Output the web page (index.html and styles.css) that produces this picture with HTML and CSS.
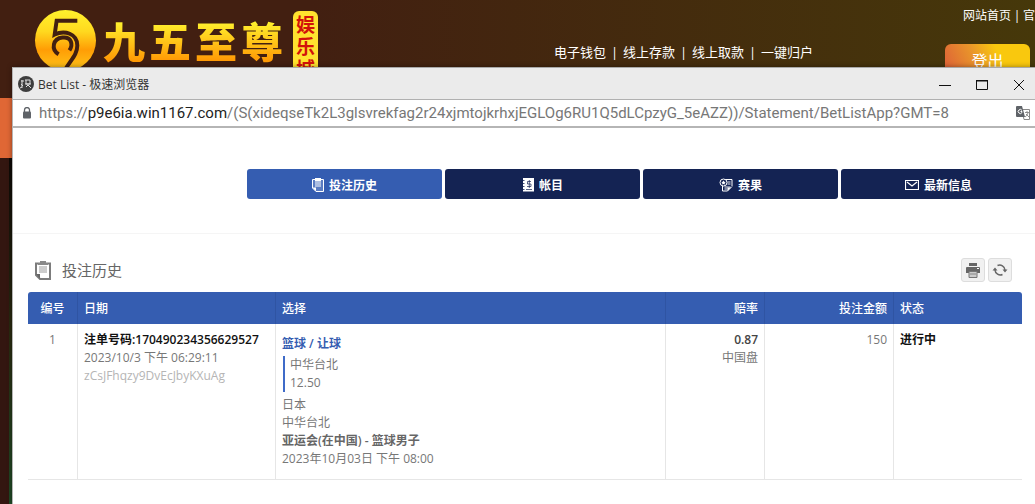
FILE: index.html
```html
<!DOCTYPE html>
<html lang="zh-CN">
<head>
  <meta charset="UTF-8" />
  <title>Bet List</title>
  <link rel="stylesheet" href="styles.css">
</head>
<body>

  <!-- casino site behind the popup -->
  <div class="site">
    <header class="site-header">
      <div class="logo">
        <svg class="logo-ball" viewBox="0 0 64 64" aria-hidden="true">
          <defs>
            <linearGradient id="gold" x1="0" y1="0" x2="0" y2="1">
              <stop offset="0" stop-color="#fff22d" />
              <stop offset="0.35" stop-color="#ffd91f" />
              <stop offset="0.65" stop-color="#ff9d05" />
              <stop offset="1" stop-color="#ffc61b" />
            </linearGradient>
          </defs>
          <circle cx="32" cy="32" r="31" fill="url(#gold)" />
          <path d="M44 12H23L21 26C31 21 44 25 44 37C44 46 38 51 32 61" fill="none" stroke="#421f11" stroke-width="4" />
          <path d="M25 46C17 41 19 30 29 29C38 28 40 36 36 42" fill="none" stroke="#421f11" stroke-width="4" />
        </svg>
        <div class="logo-name"><span>九</span><span>五</span><span>至</span><span>尊</span></div>
        <span class="logo-tag">娱乐城</span>
      </div>
      <nav class="wallet-nav">
        <a href="#">电子钱包</a><i>|</i><a href="#">线上存款</a><i>|</i><a href="#">线上取款</a><i>|</i><a href="#">一键归户</a>
      </nav>
      <div class="account">
        <div class="top-links"><a href="#">网站首页</a><i>|</i><a href="#">官</a></div>
        <button class="logout">登出</button>
      </div>
    </header>
    <div class="site-band"></div>
    <div class="site-body"></div>
  </div>

  <div class="popup">
    <div class="title-bar">
      <svg class="favicon" viewBox="0 0 16 16" aria-hidden="true">
        <circle cx="8" cy="8" r="8" fill="#3e3e3e" />
        <path d="M3 5h3M4 4v8M3 8l2 2M7 4h5M8 4v4h4V4M7 8h6M8 11l2-2 3 3M2 12l2-1" fill="none" stroke="#ddd" stroke-width="1" />
      </svg>
      <span class="window-title">Bet List - 极速浏览器</span>
      <div class="window-buttons">
        <button aria-label="最小化"><svg viewBox="0 0 12 12"><path d="M0 6.500h12" /></svg></button>
        <button aria-label="最大化"><svg viewBox="0 0 12 12"><path d="M.5 1v9.500h11V1M0 1.500h12" /><path d="M0 2h12" /></svg></button>
        <button aria-label="关闭"><svg viewBox="0 0 12 12"><path d="M1 1l10 10M11 1L1 11" /></svg></button>
      </div>
    </div>

    <div class="address-bar">
      <svg class="lock" viewBox="0 0 8 12" aria-hidden="true">
        <path d="M1.500 5V3a2.500 2.500 0 0 1 5 0v2" fill="none" stroke="#5f6368" stroke-width="1.300" />
        <rect y="4.500" width="8" height="7" rx="1" fill="#5f6368" />
      </svg>
      <span class="url">https://<b>p9e6ia.win1167.com</b>/(S(xideqseTk2L3glsvrekfag2r24xjmtojkrhxjEGLOg6RU1Q5dLCpzyG_5eAZZ))/Statement/BetListApp?GMT=8</span>
      <svg class="translate" viewBox="0 0 14 14" aria-hidden="true">
        <path d="M6 3.500h7.500v10H8z" fill="#fff" stroke="#888" />
        <path d="M1 0h5l3 11H1a1 1 0 0 1-1-1V1a1 1 0 0 1 1-1z" fill="#5f6368" />
        <path d="M6 4.500A2 2 0 1 0 6 6.500V5.500H4.500" fill="none" stroke="#fff" />
        <path d="M9 6.500h4M11 5v1.500M12 7q-1 3-3 4M10 8l3 3" fill="none" stroke="#777" stroke-width=".8" />
      </svg>
    </div>

    <nav class="tabs">
      <a class="tab active" href="#">
        <svg viewBox="0 0 12 14" aria-hidden="true"><path d="M.5 1.500h11v12H4l-3.500-3.500z" fill="#5b7cc2" stroke="#fff" /><path d="M3 0h6v3H3z" fill="#fff" /><path d="M3 4h6M3 6h6M3 8h6" stroke="#fff" stroke-width="1.200" /><path d="M.5 9.500H4v4z" fill="#fff" /></svg>
        投注历史
      </a>
      <a class="tab" href="#">
        <svg viewBox="0 0 12 14" aria-hidden="true"><path d="M1 0h11v13.500H1z" fill="#fff" /><path d="M0 2.500h2.500M0 5.500h2.500M0 8.500h2.500M0 11.500h2.500" stroke="#142353" stroke-width=".8" /><path d="M9 3.500H5.500V6H9v2.500H5M7.300 2v8M4 11.500h6" fill="none" stroke="#142353" stroke-width=".7" /></svg>
        帐目
      </a>
      <a class="tab" href="#">
        <svg class="wide" viewBox="0 0 13 14" aria-hidden="true"><path d="M3 1.500h9.500v7M3 8v5h5l4-4" fill="none" stroke="#fff" /><circle cx="4" cy="4.500" r="3.500" fill="#142353" stroke="#fff" /><path d="M4 2.500l.7 1.300 1.500.2-1 1 .2 1.500L4 6l-1.400.5.2-1.500-1-1 1.500-.2z" fill="#fff" /><path d="M8 4h3M8 6h3M5 9h6M5 11h3" stroke="#fff" stroke-width=".9" /><path d="M8 9.500h3.500L8 13z" fill="#fff" /></svg>
        赛果
      </a>
      <a class="tab" href="#">
        <svg class="wide" viewBox="0 0 14 14" aria-hidden="true"><path d="M.5 2.500h13v9H.5zM2 4l5 4 5-4" fill="none" stroke="#fff" stroke-width="1.200" /></svg>
        最新信息
      </a>
    </nav>

    <main class="statement">
      <div class="heading">
        <svg class="clipboard" viewBox="0 0 16 19" aria-hidden="true">
          <path d="M1 2.500h14v15.500H5l-4-4z" fill="#fff" stroke="#7c7c7c" stroke-width="2" />
          <path d="M4 5h8v7H4z" fill="#ccc" />
          <path d="M5 0h6v2h2v2H3V2h2z" fill="#888" />
          <path d="M1 13h4v5z" fill="#666" />
        </svg>
        <h1>投注历史</h1>
        <button class="tool" aria-label="打印">
          <svg viewBox="0 0 14 14"><path d="M3 0h8v3H3zM1 4h12a1 1 0 0 1 1 1v5H0V5a1 1 0 0 1 1-1z" fill="#666" /><path d="M3 8.500h8v6H3z" fill="#ccc" stroke="#777" /><path d="M4 11h6" stroke="#888" /><path d="M11 5.500h2" stroke="#fff" /></svg>
        </button>
        <button class="tool" aria-label="刷新">
          <svg viewBox="0 0 14 14"><path d="M4.500 2.500A5.300 5.300 0 0 1 12 7M9.500 11.500A5.300 5.300 0 0 1 2 7" fill="none" stroke="#666" stroke-width="1.500" /><path d="M9.500 6.500h5L12 9.500zM-.5 7.500h5L2 4.500z" fill="#666" /></svg>
        </button>
      </div>

      <table class="bets">
        <thead>
          <tr>
            <th class="col-no">编号</th>
            <th class="col-date">日期</th>
            <th class="col-pick">选择</th>
            <th class="col-odds">赔率</th>
            <th class="col-stake">投注金额</th>
            <th class="col-status">状态</th>
          </tr>
        </thead>
        <tbody>
          <tr>
            <td class="col-no">1</td>
            <td>
              <div class="ticket">注单号码:170490234356629527</div>
              <div>2023/10/3 下午 06:29:11</div>
              <div class="hash">zCsJFhqzy9DvEcJbyKXuAg</div>
            </td>
            <td>
              <div class="sport">篮球 / 让球</div>
              <div class="pick">
                <div>中华台北</div>
                <div>12.50</div>
              </div>
              <div>日本</div>
              <div>中华台北</div>
              <div class="league">亚运会(在中国) - 篮球男子</div>
              <div>2023年10月03日 下午 08:00</div>
            </td>
            <td class="col-odds"><div class="odds">0.87</div><div>中国盘</div></td>
            <td class="col-stake stake">150</td>
            <td class="status">进行中</td>
          </tr>
        </tbody>
      </table>
    </main>
  </div>

</body>
</html>
```

FILE: styles.css
```css
* {
  box-sizing: border-box;
}
body {
  margin: 0;
  min-height: 100vh;
  overflow: hidden;
  position: relative;
  font-family: "Open Sans", "Noto Sans CJK SC", sans-serif;
  font-size: 12px;
  background: #331610;
}
a {
  color: inherit;
  text-decoration: none;
}
button {
  padding: 0;
  border: none;
  font-family: inherit;
}
i {
  font-style: normal;
}

/* site */
.site {
  display: flex;
  flex-direction: column;
  height: 100vh;
}
.site-header {
  display: flex;
  height: 98px;
  color: white;
  background: linear-gradient(90deg, #421f11 30%, #46380a);
}
.logo {
  display: flex;
  align-items: flex-start;
  flex: 1;
  padding: 9px 0 0 34px;
}
.logo-ball {
  width: 63px;
  height: 63px;
}
.logo-name {
  display: flex;
  gap: 4px;
  margin: 2px 10px 0 6px;
  font-family: "Noto Sans CJK SC", sans-serif;
  font-size: 42px;
  font-weight: 900;
  line-height: 58px;
}
.logo-name span {
  color: transparent;
  background: linear-gradient(#fff02d 20%, #ff9a05 85%);
  background-clip: text;
  -webkit-background-clip: text;
}
.logo-tag {
  width: 25px;
  height: 80px;
  margin-top: 2px;
  padding: 3px;
  border-radius: 6px;
  background: #ffe22f;
  color: #d2120a;
  font-size: 19px;
  font-weight: 700;
  line-height: 22px;
}
.wallet-nav {
  display: flex;
  padding-top: 43px;
  font-size: 13px;
  line-height: 18px;
}
.wallet-nav i {
  width: 17px;
  text-align: center;
}
.account {
  width: 222px;
  padding-left: 132px;
}
.top-links {
  display: flex;
  padding: 7px 0 0 18px;
  line-height: 18px;
  white-space: nowrap;
}
.top-links i {
  width: 13px;
  text-align: center;
}
.logout {
  display: block;
  width: 85px;
  height: 36px;
  margin-top: 19px;
  padding-bottom: 4px;
  border-radius: 6px;
  background: linear-gradient(65deg, #dc5a39, #e9962a 40%, #f9c80e 65%);
  color: white;
  font-size: 16px;
}
.site-band {
  height: 60px;
  background: #e06735;
}
.site-body {
  flex: 1;
  width: 12px;
  border-right: 3px solid;
  border-image: linear-gradient(#0c0805, #2a2a10 50%, #1f4a26) 1;
}

/* popup window */
.popup {
  position: absolute;
  top: 67px;
  left: 12px;
  right: -1px;
  bottom: 0;
  border-top: 1px solid #a9a9a9;
  border-left: 1px solid #b5b5b5;
  background: white;
  box-shadow: 0 0 5px rgba(0, 0, 0, 0.4);
}
.title-bar {
  display: flex;
  align-items: center;
  height: 31px;
  padding: 0 11px 0 5px;
  background: #ebebeb;
  color: #333;
}
.favicon {
  width: 16px;
  height: 16px;
  margin-right: 4px;
}
.window-title {
  flex: 1;
}
.window-buttons {
  display: flex;
  gap: 25px;
  margin-top: 3px;
}
.window-buttons button {
  width: 12px;
  height: 12px;
  background: none;
}
.window-buttons svg {
  display: block;
  width: 12px;
  height: 12px;
  fill: none;
  stroke: #111;
}
.address-bar {
  display: flex;
  align-items: center;
  height: 29px;
  padding: 0 6px 0 10px;
  border-top: 1px solid #b0b0b0;
  border-bottom: 2px solid #b5b5b5;
  color: #777;
}
.lock {
  width: 8px;
  height: 12px;
  margin-right: 8px;
}
.url {
  flex: 1;
  font-family: Roboto, sans-serif;
  font-size: 15px;
  white-space: nowrap;
}
.url b {
  font-weight: normal;
  color: #222;
}
.translate {
  width: 14px;
  height: 14px;
}

.tabs {
  display: grid;
  grid-template-columns: repeat(4, 1fr);
  gap: 3px;
  padding: 41px 0 34px 234px;
  border-bottom: 1px solid #f5f5f5;
}
.tab {
  display: flex;
  align-items: center;
  justify-content: center;
  gap: 5px;
  height: 30px;
  padding-top: 1px;
  border-radius: 3px;
  background: #142353;
  color: white;
  font-weight: bold;
}
.tab.active {
  background: #355db1;
}
.tab svg {
  width: 12px;
  height: 14px;
}
.tab .wide {
  width: 14px;
}

/* statement */
.statement {
  padding: 24px 14px 0 15px;
  color: #777;
}
.heading {
  display: flex;
  align-items: center;
  gap: 3px;
  height: 24px;
  margin: 0 10px 10px 7px;
}
.clipboard {
  width: 16px;
  height: 19px;
}
h1 {
  flex: 1;
  margin: 0 0 0 8px;
  font-size: 15px;
  font-weight: normal;
  line-height: 20px;
  color: #666;
}
.tool {
  display: grid;
  place-items: center;
  width: 24px;
  height: 24px;
  border: 1px solid #ddd;
  border-radius: 3px;
  background: #f1f1f1;
}
.tool svg {
  width: 14px;
  height: 14px;
  overflow: visible;
}
.bets {
  width: 100%;
  border-spacing: 0;
  table-layout: fixed;
  line-height: 18px;
}
th {
  height: 32px;
  padding: 2px 6px 0;
  border-right: 1px solid #2f54a3;
  background: #355db1;
  color: white;
  font-weight: 500;
  text-align: left;
}
th:first-child {
  border-top-left-radius: 3px;
}
th:last-child {
  border-top-right-radius: 3px;
  border-right: none;
}
td {
  padding: 7px 6px 11px;
  border-right: 1px solid #e6e6e6;
  border-bottom: 1px solid #e6e6e6;
  vertical-align: top;
}
td:last-child {
  border-right: none;
}
.col-no {
  width: 50px;
  text-align: center;
}
.col-date {
  width: 198px;
}
.col-odds {
  width: 99px;
  text-align: right;
}
.col-stake {
  width: 129px;
  text-align: right;
}
.col-status {
  width: 128px;
}
.ticket,
.status {
  color: #111;
  font-weight: 600;
}
.hash {
  color: #b5b5b5;
}
.sport {
  margin: 4px 0 3px;
  color: #355db1;
  font-weight: 600;
}
.pick {
  margin: 0 0 4px 1px;
  padding-left: 5px;
  border-left: 2px solid #3f6bc8;
}
.league {
  color: #666;
  font-weight: 600;
}
.odds {
  color: #444;
  font-weight: 600;
}
.stake {
  font-weight: 500;
}
```
